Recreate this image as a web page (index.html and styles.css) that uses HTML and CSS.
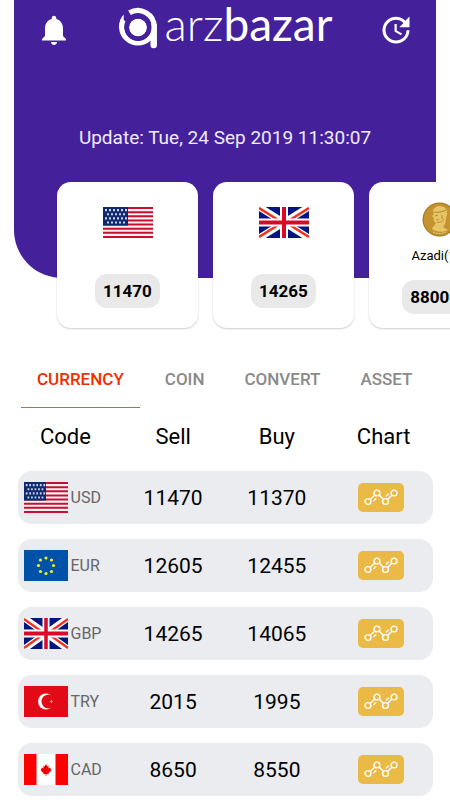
FILE: index.html
```
<!DOCTYPE html>
<html lang="en">
<head>
    <meta charset="UTF-8">
    <meta name="viewport" content="width=device-width, initial-scale=1.0">
    <title>arzbazar</title>
    <link rel="stylesheet" href="styles.css">
</head>
<body>

    <!-- Shared drawings -->
    <svg class="sprite" aria-hidden="true">
        <symbol id="flag-us" viewBox="0 0 50 30" preserveAspectRatio="none">
            <rect width="50" height="30" fill="#f7f0f4"/>
            <path d="M0 1h50M0 5h50M0 9h50M0 13h50M0 17h50M0 21h50M0 25h50M0 29h50" stroke="#c8102e" stroke-width="2"/>
            <rect width="25" height="18" fill="#10286e"/>
            <path d="M2 3h22M2 11h22" stroke="#c9d2ea" stroke-width="2" stroke-dasharray="2 2"/>
            <path d="M4 7h19M4 15h19" stroke="#c9d2ea" stroke-width="2" stroke-dasharray="2 2"/>
        </symbol>
        <symbol id="flag-gb" viewBox="0 0 50 31" preserveAspectRatio="none">
            <rect width="50" height="31" fill="#00157f"/>
            <path d="M0 0l50 31M50 0L0 31" stroke="#fff" stroke-width="7"/>
            <path d="M0 1l24 15M50 30L26 15M50 1L26 16M0 30l24-15" stroke="#f0321e" stroke-width="2.500"/>
            <path d="M25 0v31M0 15.500h50" stroke="#fff" stroke-width="8"/>
            <path d="M25 0v31M0 15.500h50" stroke="#d80a27" stroke-width="4"/>
        </symbol>
        <symbol id="flag-eu" viewBox="0 0 44 31" preserveAspectRatio="none">
            <rect width="44" height="31" fill="#0052a8"/>
            <g fill="#f0f01e">
                <circle cx="22" cy="8" r="1.600"/><circle cx="27.500" cy="10" r="1.600"/>
                <circle cx="29.500" cy="15.500" r="1.600"/><circle cx="27.500" cy="21.500" r="1.600"/>
                <circle cx="22" cy="23.500" r="1.600"/><circle cx="16.500" cy="21.500" r="1.600"/>
                <circle cx="14.500" cy="15.500" r="1.600"/><circle cx="16.500" cy="10" r="1.600"/>
            </g>
        </symbol>
        <symbol id="flag-tr" viewBox="0 0 44 31" preserveAspectRatio="none">
            <rect width="44" height="31" fill="#e30a17"/>
            <circle cx="22" cy="15.500" r="8" fill="#fff"/>
            <circle cx="24.500" cy="15.500" r="7" fill="#e30a17"/>
            <path d="M25.500 15.500l1.600-.5.900-1.300v1.500l1.200.3-1.200.4v1.500l-.9-1.300z" fill="#fff"/>
        </symbol>
        <symbol id="flag-ca" viewBox="0 0 44 31" preserveAspectRatio="none">
            <rect width="44" height="31" fill="#fff"/>
            <path d="M0 0h12.500v31H0zM31.500 0H44v31H31.500z" fill="#ff0000"/>
            <path d="M22 10l1.400 2.400 1.300-.6-.3 2.800 1.300-1 .4 1 1.100-.2-.5 1.700.7.500-3 2.600.2 1-2.300-.3v2.300h-.6v-2.300l-2.300.3.200-1-3-2.600.7-.5-.5-1.700 1.100.2.400-1 1.300 1-.3-2.800 1.300.6z" fill="#f00000"/>
        </symbol>
        <symbol id="chart" viewBox="0 0 46 29">
            <g fill="none" stroke="#fff" stroke-width="1.400">
                <circle cx="10" cy="18.500" r="2.900"/>
                <circle cx="19" cy="10" r="2.900"/>
                <circle cx="27.500" cy="18.500" r="2.900"/>
                <circle cx="36" cy="10" r="2.900"/>
                <path d="M12.100 16.500l4.800-4.500M21 12l4.600 4.500M29.600 16.500l4.400-4.500M15.500 18l2.700-2.700M28 13.500l2.700-2.700"/>
            </g>
        </symbol>
    </svg>

    <header class="hero">
        <div class="topbar">
            <button class="icon-button" aria-label="Notifications">
                <svg width="36" height="36" viewBox="0 0 24 24" fill="#fff"><path d="M12 22c1.100 0 2-.9 2-2h-4c0 1.100.89 2 2 2zm6-6v-5c0-3.070-1.640-5.640-4.500-6.320V4c0-.83-.67-1.500-1.500-1.500s-1.500.67-1.500 1.500v.68C7.630 5.360 6 7.920 6 11v5l-2 2v1h16v-1l-2-2z"/></svg>
            </button>
            <div class="logo">
                <svg width="40" height="44" viewBox="0 0 40 44">
                    <circle cx="20" cy="21.500" r="9" fill="#fff"/>
                    <g fill="none" stroke="#fff" stroke-width="5.200">
                        <path d="M11.500 6.800A16.300 16.300 0 0 1 36.200 21"/>
                        <path d="M36.200 22A16.300 16.300 0 0 1 3.700 22Q3.700 17 5 14"/>
                        <path d="M35.700 20v19" stroke-width="6.500" stroke-linecap="round"/>
                    </g>
                    <path d="M1.100 22Q1.300 13 5.700 8.500V24z" fill="#fff"/>
                    <circle cx="20" cy="21.500" r="11.300" fill="none" stroke="#45209b" stroke-width="4.400"/>
                </svg>
                <span class="logo-text">arz<b>bazar</b></span>
            </div>
            <button class="icon-button" aria-label="Refresh">
                <svg width="36" height="36" viewBox="0 0 24 24" fill="#fff"><path d="M21 10.120h-6.780l2.740-2.820c-2.730-2.700-7.150-2.800-9.880-.1-2.730 2.710-2.730 7.080 0 9.790s7.150 2.710 9.880 0C18.320 15.650 19 14.080 19 12.100h2c0 1.980-.88 4.550-2.640 6.290-3.510 3.480-9.210 3.480-12.720 0-3.500-3.470-3.530-9.110-.02-12.580s9.140-3.470 12.650 0L21 3v7.120zM12.500 8v4.250l3.500 2.080-.72 1.210L11 13V8h1.500z"/></svg>
            </button>
        </div>
        <p class="update">Update: Tue, 24 Sep 2019 11:30:07</p>
    </header>

    <section class="cards">
        <div class="card">
            <svg class="card-flag"><use href="#flag-us"/></svg>
            <span class="price">11470</span>
        </div>
        <div class="card">
            <svg class="card-flag"><use href="#flag-gb"/></svg>
            <span class="price">14265</span>
        </div>
        <div class="card coin-card">
            <svg width="35" height="35" viewBox="0 0 35 35">
                <circle cx="17.500" cy="17.500" r="17" fill="#a97c22"/>
                <circle cx="17.500" cy="17.500" r="15.800" fill="#c2932f"/>
                <path d="M11 9c1-5 9-7 13-2 2 3 1 6 0 9 0 4-1 7-3 9l5 3c-5 3-12 2-16-1 1-3 3-4 4-6-2-1-3-3-2-5l-2-2 2-2z" fill="#e6c565"/>
                <path d="M12 10c4 1 8 0 12-2M13 14l3-1M14 17c1 1 2 1 3 0M15 20c2 1 5 0 7-3M20 13v4" fill="none" stroke="#b88a2e"/>
                <path d="M11 30c4 2 9 2 13 0" fill="none" stroke="#ecd079" stroke-dasharray="2 1"/>
            </svg>
            <span class="coin-name">Azadi(1g)</span>
            <span class="price">880000</span>
        </div>
    </section>

    <nav class="tabs">
        <button class="tab active">CURRENCY</button>
        <button class="tab">COIN</button>
        <button class="tab">CONVERT</button>
        <button class="tab">ASSET</button>
    </nav>

    <table class="rates">
        <thead>
            <tr><th>Code</th><th>Sell</th><th>Buy</th><th>Chart</th></tr>
        </thead>
        <tbody>
            <tr>
                <td><div class="code"><svg class="flag"><use href="#flag-us"/></svg>USD</div></td>
                <td>11470</td>
                <td>11370</td>
                <td><button class="chart-button" aria-label="USD chart"><svg width="46" height="29"><use href="#chart"/></svg></button></td>
            </tr>
            <tr>
                <td><div class="code"><svg class="flag"><use href="#flag-eu"/></svg>EUR</div></td>
                <td>12605</td>
                <td>12455</td>
                <td><button class="chart-button" aria-label="EUR chart"><svg width="46" height="29"><use href="#chart"/></svg></button></td>
            </tr>
            <tr>
                <td><div class="code"><svg class="flag"><use href="#flag-gb"/></svg>GBP</div></td>
                <td>14265</td>
                <td>14065</td>
                <td><button class="chart-button" aria-label="GBP chart"><svg width="46" height="29"><use href="#chart"/></svg></button></td>
            </tr>
            <tr>
                <td><div class="code"><svg class="flag"><use href="#flag-tr"/></svg>TRY</div></td>
                <td>2015</td>
                <td>1995</td>
                <td><button class="chart-button" aria-label="TRY chart"><svg width="46" height="29"><use href="#chart"/></svg></button></td>
            </tr>
            <tr>
                <td><div class="code"><svg class="flag"><use href="#flag-ca"/></svg>CAD</div></td>
                <td>8650</td>
                <td>8550</td>
                <td><button class="chart-button" aria-label="CAD chart"><svg width="46" height="29"><use href="#chart"/></svg></button></td>
            </tr>
        </tbody>
    </table>

</body>
</html>
```
FILE: styles.css
```
* {
    box-sizing: border-box;
}

html {
    scrollbar-width: none;
}

body {
    margin: 0;
    background-color: #fff;
    font-family: Roboto, sans-serif;
    color: #000;
}

button {
    padding: 0;
    border: none;
    background: none;
    font-family: inherit;
    cursor: pointer;
}

svg {
    display: block;
}

.sprite {
    width: 0;
    height: 0;
    position: absolute;
}

/* Purple header */
.hero {
    margin: 0 14px;
    padding-bottom: 128px;
    background-color: #45209b;
    border-radius: 0 0 48px 48px;
    color: #fff;
}

.topbar {
    display: flex;
    justify-content: space-between;
    align-items: center;
    height: 60px;
    padding: 0 22px;
}

.logo {
    display: flex;
    align-items: flex-start;
    gap: 7px;
    padding-bottom: 4px;
}

.logo-text {
    font-family: Lato, sans-serif;
    font-size: 46px;
    font-weight: 300;
    line-height: 36px;
}

.logo-text b {
    font-weight: 400;
}

.update {
    margin: 66px 0 0;
    font-size: 19px;
    line-height: 24px;
    text-align: center;
    color: #f0ecff;
}

/* Cards over the lower edge of the header */
.cards {
    display: flex;
    gap: 15px;
    margin-top: -96px;
    padding: 0 0 4px 57px;
    overflow-x: auto;
    scrollbar-width: none;
}

.card {
    display: flex;
    flex-direction: column;
    align-items: center;
    justify-content: space-between;
    flex: 0 0 141px;
    height: 146px;
    padding: 25px 0 20px;
    background-color: #fff;
    border-radius: 14px;
    box-shadow: 0 1px 2px rgba(0, 0, 0, 0.2);
}

.coin-card {
    padding: 20px 0 14px;
}

.card-flag {
    width: 50px;
    height: 31px;
}

.coin-name {
    padding-bottom: 6px;
    font-size: 13px;
}

.price {
    padding: 0 8px;
    background-color: #e9e9e9;
    border-radius: 12px;
    font-size: 17px;
    font-weight: 700;
    line-height: 34px;
}

/* Tabs */
.tabs {
    display: flex;
    gap: 10px;
    margin-top: 18px;
    padding: 0 21px;
}

.tab {
    height: 58px;
    padding: 0 15px;
    border-bottom: 1px solid transparent;
    font-size: 17px;
    font-weight: 500;
    color: #8a8a8a;
}

.tab.active {
    padding: 0 16px;
    border-bottom-color: #f4523b;
    color: #f22d00;
}

/* Rates table */
.rates {
    width: calc(100% - 35px);
    margin: 0 auto;
    table-layout: fixed;
    border-spacing: 0 15px;
    font-size: 21px;
    text-align: center;
}

.rates th {
    height: 33px;
    padding: 0 0 6px;
    font-size: 22px;
    font-weight: 400;
}

.rates th:first-child {
    padding-right: 8px;
}

.rates th:last-child {
    padding-left: 6px;
}

.rates td {
    height: 53px;
    padding: 0;
    background-color: #ebecf0;
}

.rates td:first-child {
    border-radius: 14px 0 0 14px;
}

.rates td:last-child {
    border-radius: 0 14px 14px 0;
}

.code {
    display: flex;
    align-items: center;
    gap: 3px;
    padding-left: 6px;
    font-size: 16px;
    color: #666;
}

.flag {
    width: 44px;
    height: 31px;
}

.chart-button {
    display: block;
    margin: 0 auto;
    background-color: #eab946;
    border-radius: 5px;
}
```
